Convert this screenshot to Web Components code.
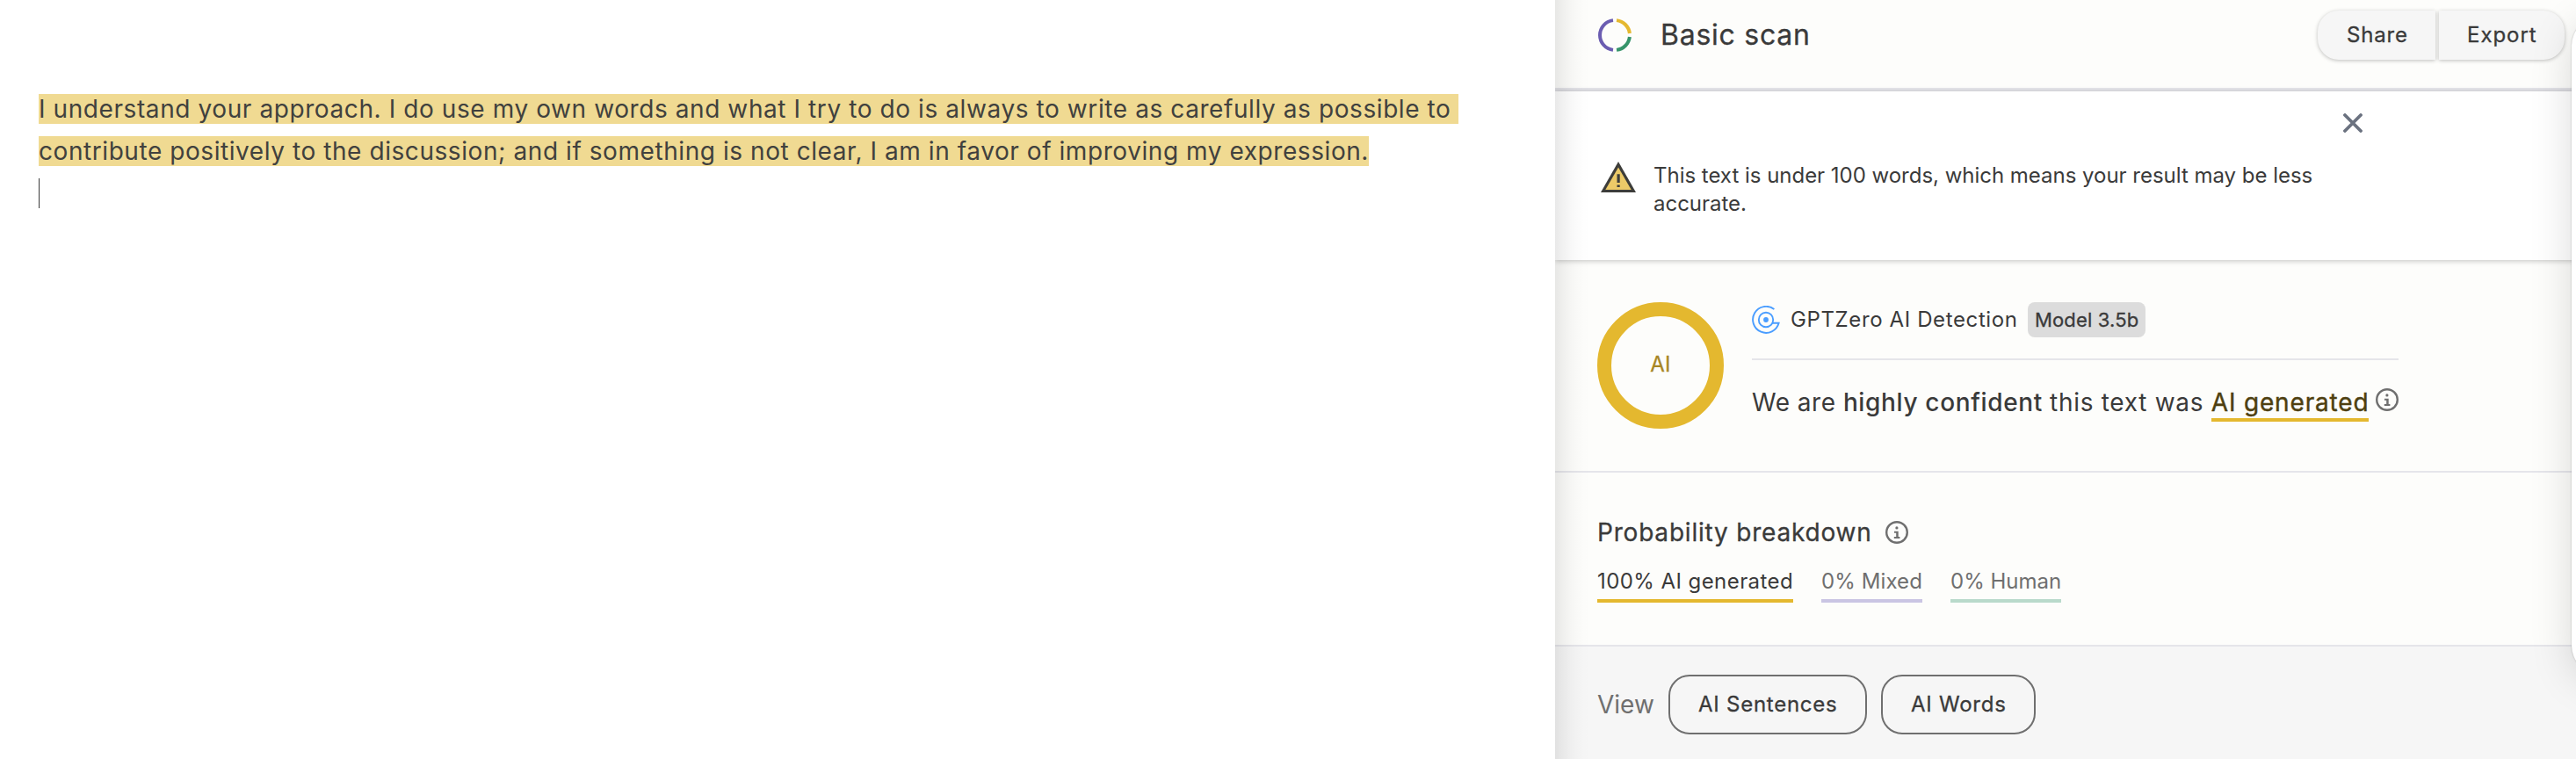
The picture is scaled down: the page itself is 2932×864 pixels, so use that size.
<!DOCTYPE html>
<html lang="en">
<head>
<meta charset="utf-8">
<title>Basic scan</title>
<style>
html,body{margin:0;height:100%;background:#fff;overflow:hidden}
body{font-family:Inter,"Liberation Sans",sans-serif;color:#3a3a3a}
</style>
</head>
<body>
<scan-app></scan-app>
<script>
function define(name, html) {
  const t = document.createElement('template');
  t.innerHTML = html;
  customElements.define(name, class extends HTMLElement {
    constructor() {
      super();
      this.attachShadow({mode: 'open'}).append(t.content.cloneNode(true));
    }
  });
}

define('info-icon', `
<style>:host{display:block;flex:none;width:26px;height:26px;white-space:normal;line-height:0}svg{display:block}</style>
<svg width="26" height="26" viewBox="0 0 26 26" fill="#6f6f6f">
<circle cx="13" cy="13" r="11.8" fill="none" stroke="#6f6f6f" stroke-width="2.4"/>
<circle cx="12.9" cy="7.9" r="1.6"/>
<path d="M10 11.8h4.7v6.2h1.7v2H9.8v-2h2.4v-4.2H10z"/></svg>`);

define('text-editor', `
<style>
:host{display:block;box-sizing:border-box;width:1770px;padding:100px 44px 0;background:#fff;font-size:28px;line-height:48px;color:#41413e}
p{margin:0;white-space:pre;height:48px}
mark{background:#f0da92;color:inherit}
.a{letter-spacing:.588px}.b{letter-spacing:.567px}
.caret{width:1px;height:34px;margin-top:7px;background:#3a3a3a}
</style>
<p><mark class="a">I understand your approach. I do use my own words and what I try to do is always to write as carefully as possible to </mark></p>
<p><mark class="b">contribute positively to the discussion; and if something is not clear, I am in favor of improving my expression.</mark></p>
<div class="caret"></div>`);

define('panel-header', `
<style>
:host{display:flex;box-sizing:border-box;height:104px;padding:12px 13px 32px 49px;border-bottom:4px solid #e5e5ea;background:#fdfdfb;align-items:center}
svg{display:block;flex:none}
h1{margin:0 0 0 33px;font-size:32px;line-height:40px;font-weight:400;-webkit-text-stroke:.3px;letter-spacing:.75px;flex:1}
.group{display:flex;gap:4px}
button{box-sizing:border-box;border:0;margin:0;padding:0 0 0 33px;height:56px;width:134px;background:#f6f6f6;color:#3a3a3a;font:400 24px/32px Inter,sans-serif;-webkit-text-stroke:.3px;letter-spacing:.8px;text-align:left;border-radius:24px 0 0 24px;box-shadow:0 1px 4px rgba(0,0,0,.25)}
button+button{width:143px;padding-left:32px;border-radius:0 24px 24px 0;letter-spacing:.95px}
</style>
<svg width="38" height="38" viewBox="0 0 38 38" fill="none" stroke-width="4">
<path d="M17 2.12A17 17 0 0 0 17 35.88" stroke="#6b5db1"/>
<path d="M21 2.12A17 17 0 0 1 35.88 17" stroke="#e5b82f"/>
<path d="M35.88 21A17 17 0 0 1 21 35.88" stroke="#36946a"/></svg>
<h1>Basic scan</h1>
<div class="group"><button>Share</button><button>Export</button></div>`);

define('short-text-alert', `
<style>
:host{display:block;box-sizing:border-box;height:192px;padding:25px 0 0 52px;background:#fff;box-shadow:0 1px 6px rgba(0,0,0,.24);position:relative}
.top{display:flex;justify-content:flex-end;padding-right:243px}
svg{display:block;flex:none}
.row{display:flex;gap:20px;margin-top:33px}
p{margin:0;font-size:24px;line-height:32px;width:790px;letter-spacing:-.02px}
</style>
<div class="top"><svg width="22" height="22" viewBox="0 0 22 22" stroke="#6b7280" stroke-width="3.8" stroke-linecap="round"><path d="M2 2L20 20M20 2L2 20"/></svg></div>
<div class="row">
<svg width="40" height="35" viewBox="0 0 40 35"><path d="M20 0L40 35H0z" fill="#3d3d3a"/><path d="M20 6.6L34.7 32H5.3z" fill="#ecca68"/><path d="M18.5 14.3h3.2V24h-3.2zM18.5 26.6h3.2v2.4h-3.2z" fill="#3d3d3a"/></svg>
<p>This text is under 100 words, which means your result may be less accurate.</p></div>`);

define('score-ring', `
<style>:host{display:flex;box-sizing:border-box;flex:none;width:144px;height:144px;border:16px solid #e4b82f;border-radius:50%;align-items:center;justify-content:center;font-size:24px;line-height:32px;-webkit-text-stroke:.3px;letter-spacing:.3px;color:#a88624;padding-bottom:3px}</style>
<slot></slot>`);

define('scan-result', `
<style>
:host{display:flex;box-sizing:border-box;height:242px;padding:48px 0 0 48px;gap:32px;border-bottom:2px solid #e5e5ea;background:#fdfdfb}
.col{width:736px}
.model{display:flex;align-items:center;height:40px;padding-bottom:24px;border-bottom:2px solid #e5e5ea;font-size:24px}
.model svg{display:block;margin-right:12px;flex:none}
.name{letter-spacing:.62px;width:270px;line-height:32px;white-space:nowrap}
.badge{box-sizing:border-box;width:134px;height:40px;border-radius:8px;background:#dcdcdc;font-size:22px;-webkit-text-stroke:.3px;letter-spacing:.15px;line-height:40px;padding-left:8px;white-space:nowrap}
.verdict{display:flex;align-items:flex-start;padding-top:24px;font-size:28px;line-height:48px;white-space:pre}
b{font-weight:500;letter-spacing:.65px}
.verdict b.ai{box-sizing:border-box;height:46px;border-bottom:4px solid #e4b82f;color:#4e3f10;font-weight:400;-webkit-text-stroke:.4px;letter-spacing:.82px;width:179.5px}
info-icon{margin:8px 0 0 7.5px}
</style>
<score-ring>AI</score-ring>
<div class="col">
<div class="model"><svg width="32" height="32" viewBox="0 0 32 32" fill="none" stroke="#4a9dff" stroke-width="1.9"><path d="M25.4 4.1A15 15 0 1 0 30.6 19.7H23.2"/><circle cx="16" cy="16" r="8.2"/><circle cx="16" cy="16" r="2.9" fill="#4a9dff" stroke="none"/></svg><span class="name">GPTZero AI Detection</span><span class="badge">Model 3.5b</span></div>
<div class="verdict"><span style="letter-spacing:.5px">We are </span><b>highly confident </b><span style="letter-spacing:.7px">this text was </span><b class="ai">AI generated</b><info-icon></info-icon></div>
</div>`);

define('probability-breakdown', `
<style>
:host{display:block;box-sizing:border-box;height:198px;padding:48px 0 0 48px;border-bottom:2px solid #e5e5ea;background:#fdfdfb}
h2{display:flex;align-items:center;margin:0;font-size:28px;line-height:40px;font-weight:400;-webkit-text-stroke:.3px;letter-spacing:.8px}
h2 span{width:328px}
.tabs{display:flex;gap:32px;margin-top:20px}
.tabs span{box-sizing:border-box;height:40px;border-bottom:4px solid;font-size:24px;line-height:32px;white-space:nowrap}
.ai{width:223px;letter-spacing:.43px;border-color:#e4b82f!important}
.mix{width:115px;letter-spacing:.1px;color:#6f6f6f;border-color:#cac5e3!important}
.hum{width:126px;color:#6f6f6f;border-color:#b9dacb!important}
</style>
<h2><span>Probability breakdown</span><info-icon></info-icon></h2>
<div class="tabs"><span class="ai">100% AI generated</span><span class="mix">0% Mixed</span><span class="hum">0% Human</span></div>`);

define('view-bar', `
<style>
:host{display:flex;box-sizing:border-box;height:128px;padding:32px 0 0 48px;background:#f6f6f6;align-items:flex-start}
span{font-size:28px;line-height:68px;width:81px;color:#6f6f6f}
button{box-sizing:border-box;margin:0 16px 0 0;height:68px;width:226px;padding:0 0 0 32px;border:2px solid #6f6f6f;border-radius:24px;background:none;font:400 24px/32px Inter,sans-serif;-webkit-text-stroke:.3px;letter-spacing:.75px;color:#3a3a3a;text-align:left;white-space:nowrap}
button+button{width:176px}
</style>
<span>View</span><button>AI Sentences</button><button>AI Words</button>`);

define('results-panel', `
<style>
:host{display:block;position:relative;width:1162px;height:864px;overflow:hidden;background:#fdfdfb}
.shade{position:absolute;left:0;top:0;bottom:0;width:40px;z-index:3;background:linear-gradient(90deg,rgba(0,0,0,.085),rgba(0,0,0,.052) 25%,rgba(0,0,0,.024) 50%,rgba(0,0,0,.007) 75%,transparent)}
.drawer{position:absolute;left:1157px;top:20px;width:300px;height:747px;z-index:3;border-radius:32px;background:#fff;box-shadow:0 0 2px rgba(0,0,0,.25),0 8px 48px rgba(0,0,0,.15)}
</style>
<panel-header></panel-header>
<short-text-alert></short-text-alert>
<scan-result></scan-result>
<probability-breakdown></probability-breakdown>
<view-bar></view-bar>
<div class="shade"></div><div class="drawer"></div>`);

define('scan-app', `
<style>:host{display:flex;width:2932px;height:864px;overflow:hidden}text-editor,results-panel{flex:none}</style>
<text-editor></text-editor><results-panel></results-panel>`);
</script>
</body>
</html>
